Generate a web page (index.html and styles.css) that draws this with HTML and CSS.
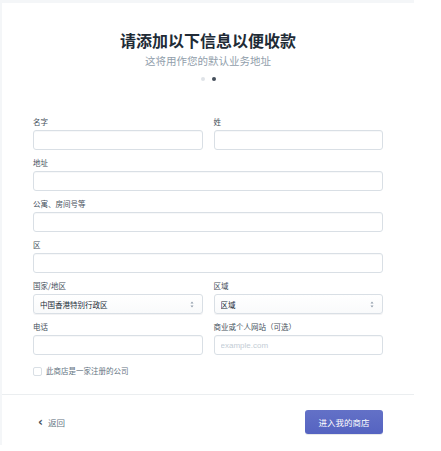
FILE: index.html
```html
<!DOCTYPE html>
<html lang="zh-CN">
<head>
    <meta charset="utf-8">
    <title>商店地址</title>
    <link rel="stylesheet" href="styles.css">
</head>
<body>
<div class="page">
    <div class="head">
        <h1 class="title">请添加以下信息以便收款</h1>
        <p class="sub">这将用作您的默认业务地址</p>
        <div class="steps"><span class="dot"></span><span class="dot on"></span></div>
    </div>

    <form class="form">
        <div class="row two">
            <div class="field"><label>名字</label><input type="text"></div>
            <div class="field"><label>姓</label><input type="text"></div>
        </div>
        <div class="row">
            <div class="field"><label>地址</label><input type="text"></div>
        </div>
        <div class="row">
            <div class="field"><label>公寓、房间号等</label><input type="text"></div>
        </div>
        <div class="row">
            <div class="field"><label>区</label><input type="text"></div>
        </div>
        <div class="row two">
            <div class="field">
                <label>国家/地区</label>
                <div class="select">
                    <select><option>中国香港特别行政区</option></select>
                    <svg class="arrows" width="4" height="7" viewBox="0 0 4 7"><path d="M2 0.5 L3.5 2.5 H0.5 Z M2 6.5 L3.5 4.5 H0.5 Z" fill="#919eab"/></svg>
                </div>
            </div>
            <div class="field">
                <label>区域</label>
                <div class="select">
                    <select><option>区域</option></select>
                    <svg class="arrows" width="4" height="7" viewBox="0 0 4 7"><path d="M2 0.5 L3.5 2.5 H0.5 Z M2 6.5 L3.5 4.5 H0.5 Z" fill="#919eab"/></svg>
                </div>
            </div>
        </div>
        <div class="row two">
            <div class="field"><label>电话</label><input type="text"></div>
            <div class="field"><label>商业或个人网站（可选）</label><input type="text" placeholder="example.com"></div>
        </div>
        <label class="check"><input type="checkbox"><span>此商店是一家注册的公司</span></label>
    </form>

    <div class="foot">
        <a class="back" href="#"><span class="chev">&lsaquo;</span>返回</a>
        <button class="btn" type="button">进入我的商店</button>
    </div>
</div>
</body>
</html>
```

FILE: styles.css
```css
body { margin: 0; background: #fff; font-family: "Noto Sans CJK SC", "Noto Sans", sans-serif; color: #212b36; }
.page { width: 412px; border-top: 3px solid #f4f6f8; border-left: 2px solid #f4f6f8; }

.head { text-align: center; padding-top: 27px; }
.title { margin: 0; font-size: 16px; line-height: 20px; font-weight: 700; color: #212b36; }
.sub { margin: 4px 0 0; font-size: 10.5px; line-height: 14px; color: #919eab; }
.steps { display: flex; justify-content: center; gap: 7px; margin-top: 9px; height: 4px; }
.dot { width: 4px; height: 4px; border-radius: 50%; background: #dfe3e8; }
.dot.on { background: #454f5b; }

.form { width: 350px; margin: 36px 0 0 31px; }
.row { margin-bottom: 8px; }
.row.two { display: grid; grid-template-columns: 1fr 1fr; column-gap: 11px; }
.field label { display: block; font-size: 7.5px; line-height: 10px; color: #454f5b; margin-bottom: 3px; }
.field input, .select select {
    display: block; box-sizing: border-box; width: 100%; height: 20px; margin: 0;
    border: 1px solid #d9dfe5; border-radius: 3px; padding: 0 6px;
    font: 8px "Liberation Sans", "Noto Sans CJK SC", sans-serif; color: #212b36;
    box-shadow: inset 0 1px 0 rgba(99,115,129,.05); outline: none; background: #fff;
}
.field input::placeholder { color: #c4cdd5; }
.select { position: relative; }
.select select {
    -webkit-appearance: none; appearance: none;
    background: linear-gradient(#fff, #f9fafb);
    box-shadow: 0 1px 0 rgba(22,29,37,.05);
    font: 7.5px "Noto Sans CJK SC", sans-serif; padding-left: 6px;
}
.arrows { position: absolute; right: 9px; top: 7px; }

.check { display: flex; align-items: center; gap: 4px; margin-top: 11px; font-size: 7.5px; line-height: 10px; color: #637381; }
.check input { -webkit-appearance: none; appearance: none; width: 9px; height: 9px; margin: 0; border: 1px solid #d9dfe5; border-radius: 2px; background: #fff; }

.foot { margin-top: 18px; border-top: 1px solid #ebeef0; padding: 15px 31px 11px 36px; display: flex; justify-content: space-between; align-items: center; }
.back { font-size: 8.5px; color: #637381; text-decoration: none; display: flex; align-items: center; }
.chev { font-family: "DejaVu Sans", sans-serif; font-size: 12px; font-weight: 700; color: #454f5b; margin-right: 5px; line-height: 10px; }
.btn {
    width: 78px; height: 24px; border: 0; border-radius: 3px; padding: 0;
    background: linear-gradient(#6371c7, #5563c1); color: #fff;
    font: 8.5px "Noto Sans CJK SC", sans-serif;
    box-shadow: 0 1px 0 rgba(22,29,37,.1);
}
```
